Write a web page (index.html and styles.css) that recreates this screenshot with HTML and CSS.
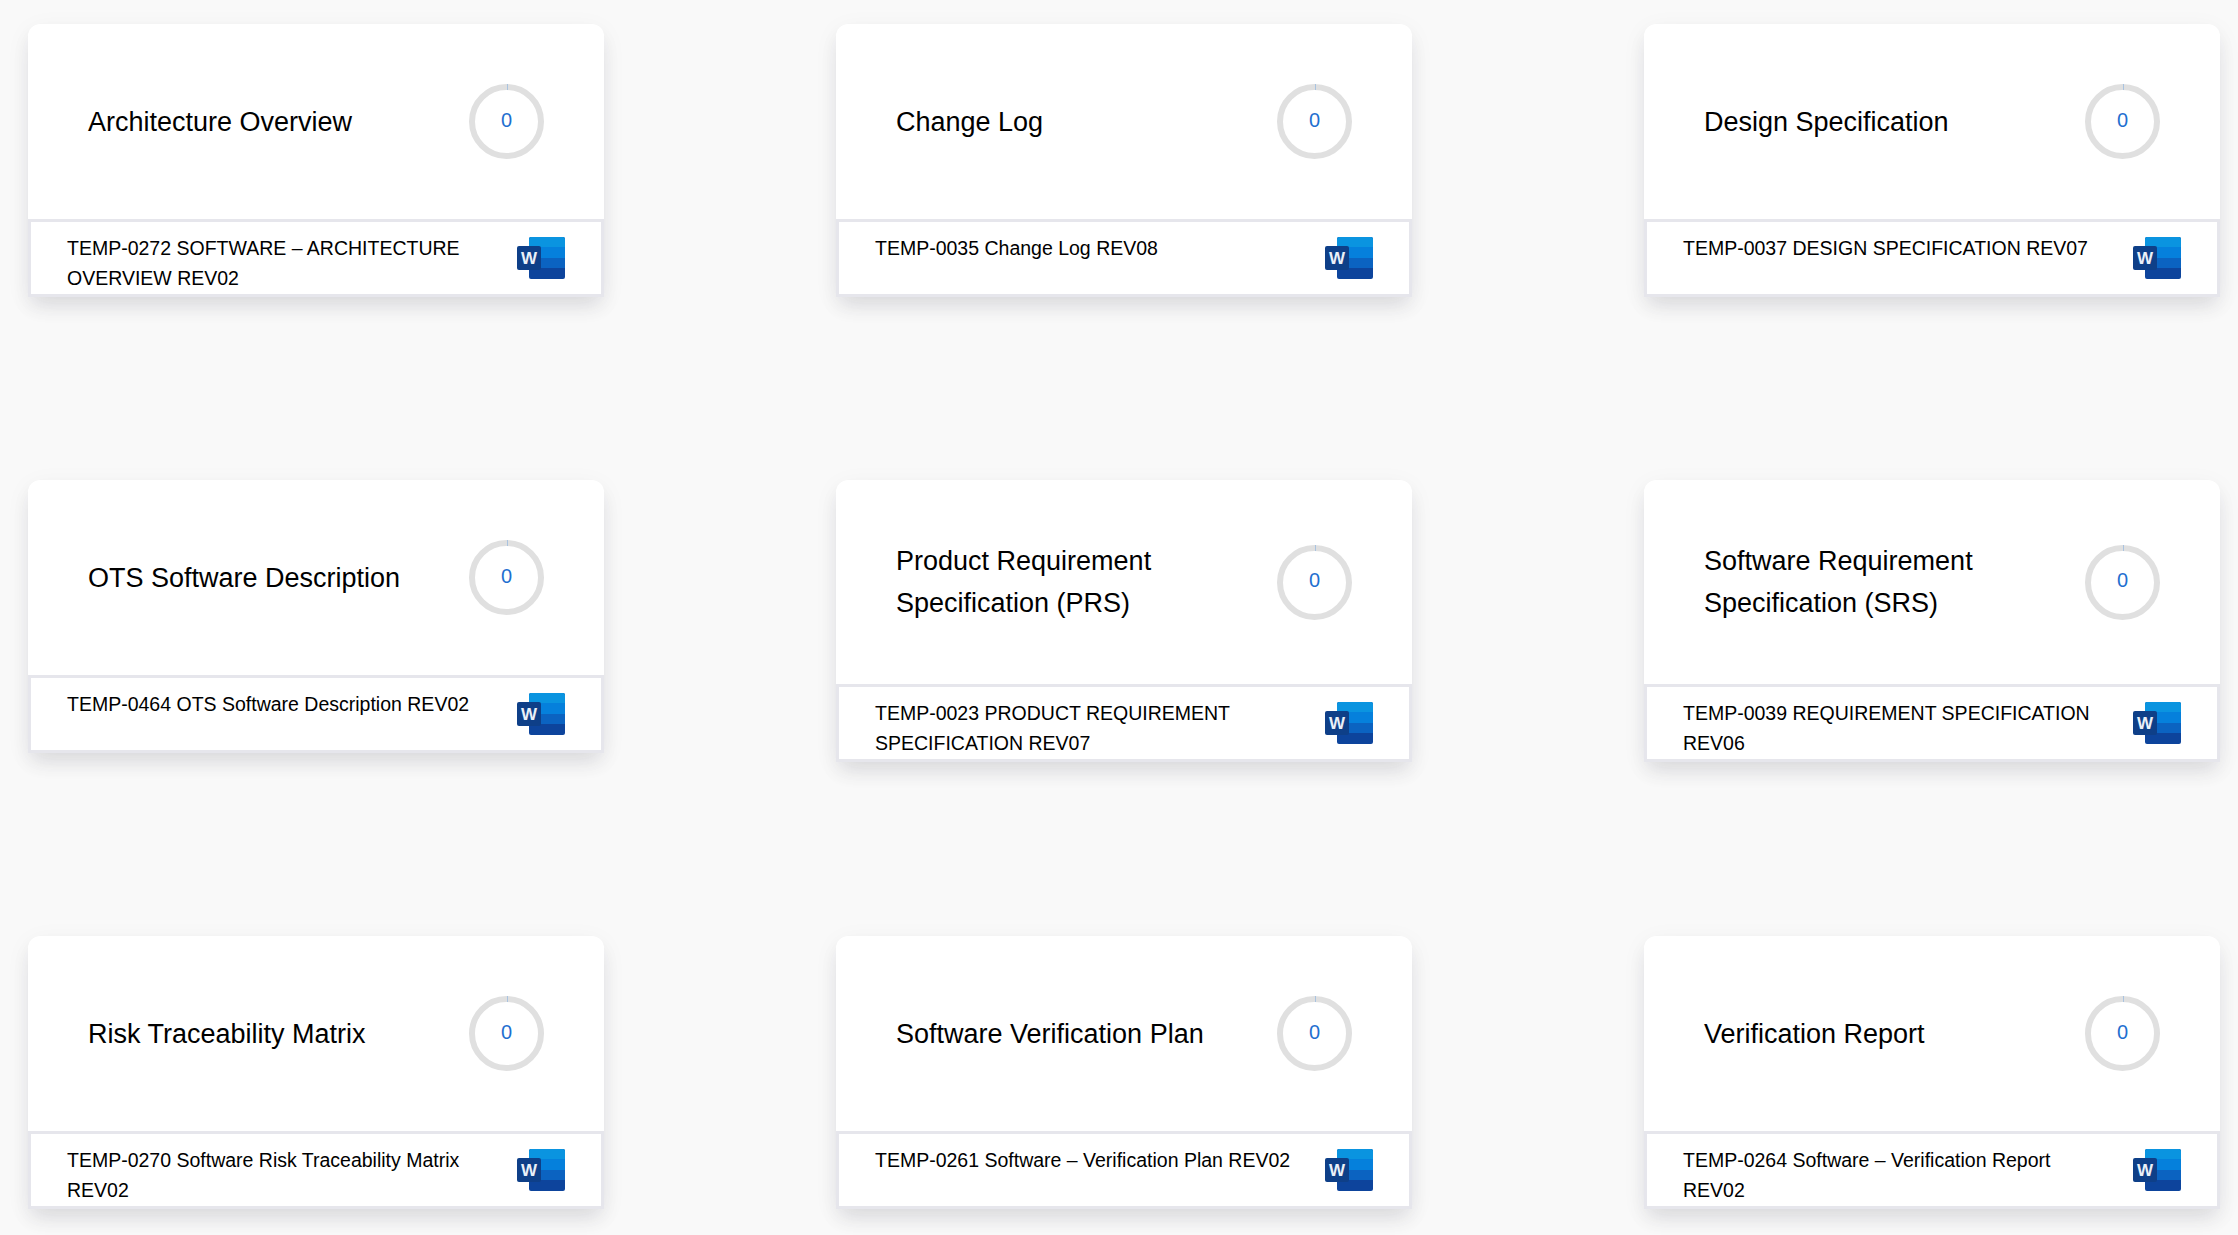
FILE: index.html
```html
<!DOCTYPE html>
<html lang="en">
<head>
<meta charset="utf-8">
<title>Templates</title>
<link rel="stylesheet" href="styles.css">
</head>
<body>
<svg class="defs" width="0" height="0" aria-hidden="true">
  <symbol id="word" viewBox="0 0 48 42">
    <rect x="12" y="0" width="36" height="42" rx="2" fill="#0d449c"/>
    <path d="M14 0h32a2 2 0 0 1 2 2v8H12V2a2 2 0 0 1 2-2z" fill="#0a94e0"/>
    <rect x="12" y="10" width="36" height="11" fill="#0580dc"/>
    <rect x="12" y="21" width="36" height="10" fill="#0b63c1"/>
    <rect x="0" y="9" width="24" height="24" rx="2" fill="#0e3f88"/>
  </symbol>
</svg>
<main class="grid">
  <article class="card">
    <div class="head"><h2 class="title">Architecture Overview</h2><div class="ring"><span class="count">0</span></div></div>
    <div class="foot"><p class="file">TEMP-0272 SOFTWARE – ARCHITECTURE OVERVIEW REV02</p><svg class="icon" viewBox="0 0 48 42"><use href="#word"/><text x="12" y="27" text-anchor="middle" class="word-w">W</text></svg></div>
  </article>
  <article class="card">
    <div class="head"><h2 class="title">Change Log</h2><div class="ring"><span class="count">0</span></div></div>
    <div class="foot"><p class="file">TEMP-0035 Change Log REV08</p><svg class="icon" viewBox="0 0 48 42"><use href="#word"/><text x="12" y="27" text-anchor="middle" class="word-w">W</text></svg></div>
  </article>
  <article class="card">
    <div class="head"><h2 class="title">Design Specification</h2><div class="ring"><span class="count">0</span></div></div>
    <div class="foot"><p class="file">TEMP-0037 DESIGN SPECIFICATION REV07</p><svg class="icon" viewBox="0 0 48 42"><use href="#word"/><text x="12" y="27" text-anchor="middle" class="word-w">W</text></svg></div>
  </article>
  <article class="card">
    <div class="head"><h2 class="title">OTS Software Description</h2><div class="ring"><span class="count">0</span></div></div>
    <div class="foot"><p class="file">TEMP-0464 OTS Software Description REV02</p><svg class="icon" viewBox="0 0 48 42"><use href="#word"/><text x="12" y="27" text-anchor="middle" class="word-w">W</text></svg></div>
  </article>
  <article class="card">
    <div class="head"><h2 class="title">Product Requirement Specification (PRS)</h2><div class="ring"><span class="count">0</span></div></div>
    <div class="foot"><p class="file">TEMP-0023 PRODUCT REQUIREMENT SPECIFICATION REV07</p><svg class="icon" viewBox="0 0 48 42"><use href="#word"/><text x="12" y="27" text-anchor="middle" class="word-w">W</text></svg></div>
  </article>
  <article class="card">
    <div class="head"><h2 class="title">Software Requirement Specification (SRS)</h2><div class="ring"><span class="count">0</span></div></div>
    <div class="foot"><p class="file">TEMP-0039 REQUIREMENT SPECIFICATION REV06</p><svg class="icon" viewBox="0 0 48 42"><use href="#word"/><text x="12" y="27" text-anchor="middle" class="word-w">W</text></svg></div>
  </article>
  <article class="card">
    <div class="head"><h2 class="title">Risk Traceability Matrix</h2><div class="ring"><span class="count">0</span></div></div>
    <div class="foot"><p class="file">TEMP-0270 Software Risk Traceability Matrix REV02</p><svg class="icon" viewBox="0 0 48 42"><use href="#word"/><text x="12" y="27" text-anchor="middle" class="word-w">W</text></svg></div>
  </article>
  <article class="card">
    <div class="head"><h2 class="title">Software Verification Plan</h2><div class="ring"><span class="count">0</span></div></div>
    <div class="foot"><p class="file">TEMP-0261 Software – Verification Plan REV02</p><svg class="icon" viewBox="0 0 48 42"><use href="#word"/><text x="12" y="27" text-anchor="middle" class="word-w">W</text></svg></div>
  </article>
  <article class="card">
    <div class="head"><h2 class="title">Verification Report</h2><div class="ring"><span class="count">0</span></div></div>
    <div class="foot"><p class="file">TEMP-0264 Software – Verification Report REV02</p><svg class="icon" viewBox="0 0 48 42"><use href="#word"/><text x="12" y="27" text-anchor="middle" class="word-w">W</text></svg></div>
  </article>
</main>
</body>
</html>
```
FILE: styles.css
```css
* { box-sizing: border-box; }
html, body { margin: 0; height: 100%; }
body {
  background: #f9f9f9;
  font-family: "Liberation Sans", Arial, sans-serif;
  color: #000;
  overflow: hidden;
}
.defs { position: absolute; }
.word-w { font: 700 17px "Liberation Sans", Arial, sans-serif; fill: #eaf0f8; }
.grid {
  display: grid;
  grid-template-columns: repeat(3, 576px);
  grid-template-rows: 456px 456px 1fr;
  column-gap: 232px;
  align-items: start;
  height: 100%;
  padding: 24px 0 0 28px;
}
.card {
  background: #fff;
  border-radius: 12px 12px 0 0;
  box-shadow: 0 12px 20px -4px rgba(40, 40, 60, 0.12), 0 6px 26px rgba(40, 40, 60, 0.05);
}
.head {
  display: flex;
  align-items: center;
  justify-content: space-between;
  padding: 60px;
}
.title {
  margin: 0;
  width: 340px;
  font-size: 27px;
  font-weight: 400;
  line-height: 42px;
}
.ring {
  position: relative;
  flex: none;
  width: 75px;
  height: 75px;
  border: 6px solid #e0e0e0;
  border-radius: 50%;
  display: flex;
  align-items: center;
  justify-content: center;
}
.ring::before {
  content: "";
  position: absolute;
  top: -6px;
  left: 50%;
  width: 1px;
  height: 6px;
  background: #a9c3e0;
}
.count {
  font-size: 20px;
  line-height: 1;
  color: #1f6fd0;
  margin-top: -4px;
}
.foot {
  display: flex;
  justify-content: space-between;
  height: 78px;
  border: 3px solid #e6e6ec;
  padding: 11px 36px 0 36px;
  overflow: hidden;
}
.file {
  margin: 0;
  width: 420px;
  font-size: 19.5px;
  line-height: 30px;
}
.icon {
  flex: none;
  width: 48px;
  height: 42px;
  margin-top: 4px;
}
```
